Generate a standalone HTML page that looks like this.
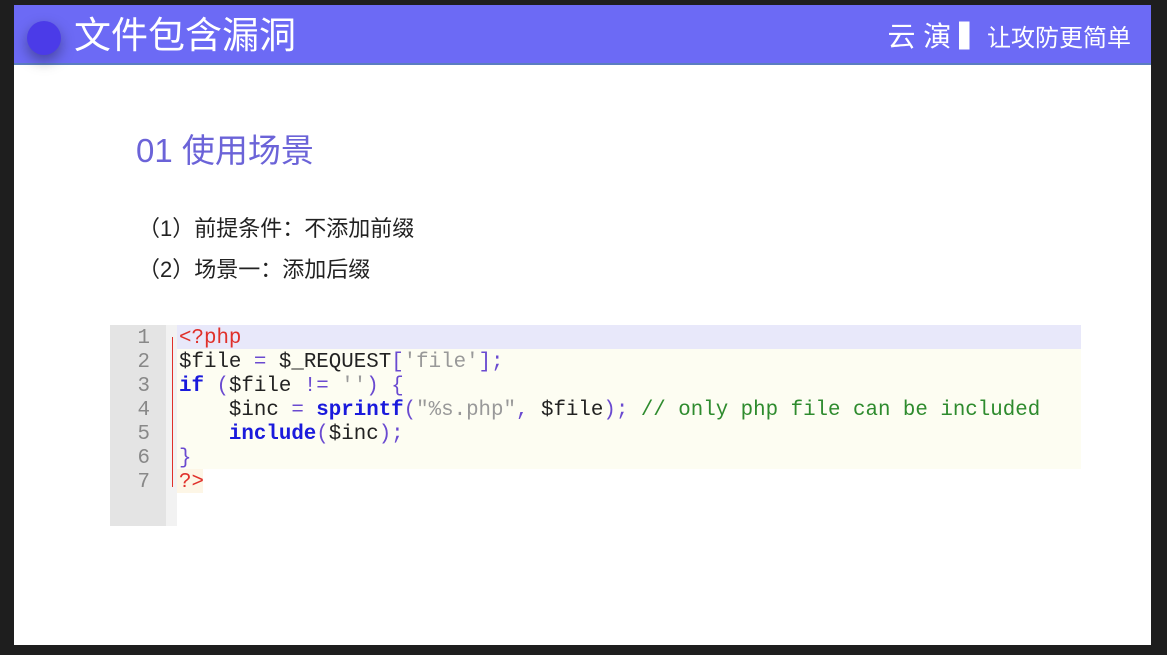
<!DOCTYPE html>
<html><head><meta charset="utf-8"><style>
body{margin:0;width:1167px;height:655px;background:#1e1e1e;position:relative;overflow:hidden;font-family:"Liberation Sans","Noto Sans CJK SC",sans-serif}
.slide{position:absolute;left:14px;top:5px;width:1137px;height:640px;background:#fff}
.hdr{position:absolute;left:0;top:0;width:1137px;height:58px;background:#6c6af5;border-bottom:2px solid #5b7ec0}
.dot{position:absolute;left:13px;top:16px;width:34px;height:34px;border-radius:50%;background:#4b3be8;box-shadow:0 6px 14px rgba(0,0,0,.35)}
.t1{position:absolute;left:60px;top:8px;color:#fff;font-size:37px;line-height:46px}
.t2{position:absolute;right:20px;top:14px;color:#fff;font-size:28px;line-height:36px}
.t2 small{font-size:24px}
.h{position:absolute;left:122px;top:119px;color:#6b63d8;font-size:33px}
.p{position:absolute;left:124px;font-size:22px;color:#222}
.code{position:absolute;left:96px;top:320px;width:969px;height:201px}
.g{position:absolute;left:0;top:0;width:56px;height:201px;background:#e4e4e4}
.fm{position:absolute;left:56px;top:0;width:11px;height:201px;background:#f2f2f2}
.ln{position:absolute;left:0;width:40px;text-align:right;color:#888;font:20.8px/28px "Liberation Mono",monospace}
.row{position:absolute;left:67px;width:902px;height:24px;font:20.8px/28px "Liberation Mono",monospace;white-space:pre;padding-left:2px;color:#222;overflow:hidden}
.r{color:#e0302a}.b{color:#1a1adc;font-weight:bold}.pu{color:#6a4ad0}.gr{color:#999}.gn{color:#2e8b2e}.v{color:#333}
</style></head><body>
<div class="slide">
<div class="hdr"><div class="dot"></div><div class="t1">文件包含漏洞</div><div class="t2">云 演 ▍<small>让攻防更简单</small></div></div>
<div class="h">01 使用场景</div>
<div class="p" style="top:206px">（1）前提条件：不添加前缀</div>
<div class="p" style="top:247px">（2）场景一：添加后缀</div>
<div class="code">
<div class="g"></div><div class="fm"></div>
<div style="position:absolute;left:62px;top:12px;width:1px;height:150px;background:#e0302a"></div>
<div class="ln" style="top:0">1</div><div class="ln" style="top:24px">2</div><div class="ln" style="top:48px">3</div><div class="ln" style="top:72px">4</div><div class="ln" style="top:96px">5</div><div class="ln" style="top:120px">6</div><div class="ln" style="top:144px">7</div>
<div class="row r" style="top:0;background:#e8e8fa">&lt;?php</div>
<div class="row" style="top:24px;background:#fdfdf2">$file <span class="pu">=</span> $_REQUEST<span class="pu">[</span><span class="gr">'file'</span><span class="pu">];</span></div>
<div class="row" style="top:48px;background:#fdfdf2"><span class="b">if</span> <span class="pu">(</span>$file <span class="pu">!=</span> <span class="gr">''</span><span class="pu">)</span> <span class="pu">{</span></div>
<div class="row" style="top:72px;background:#fdfdf2">    $inc <span class="pu">=</span> <span class="b">sprintf</span><span class="pu">(</span><span class="gr">"%s.php"</span><span class="pu">,</span> $file<span class="pu">);</span> <span class="gn">// only php file can be included</span></div>
<div class="row" style="top:96px;background:#fdfdf2">    <span class="b">include</span><span class="pu">(</span>$inc<span class="pu">);</span></div>
<div class="row" style="top:120px;background:#fdfdf2"><span class="pu">}</span></div>
<div class="row r" style="top:144px;width:24px;background:#fdf6e6">?&gt;</div>
</div>
</div>
</body></html>
